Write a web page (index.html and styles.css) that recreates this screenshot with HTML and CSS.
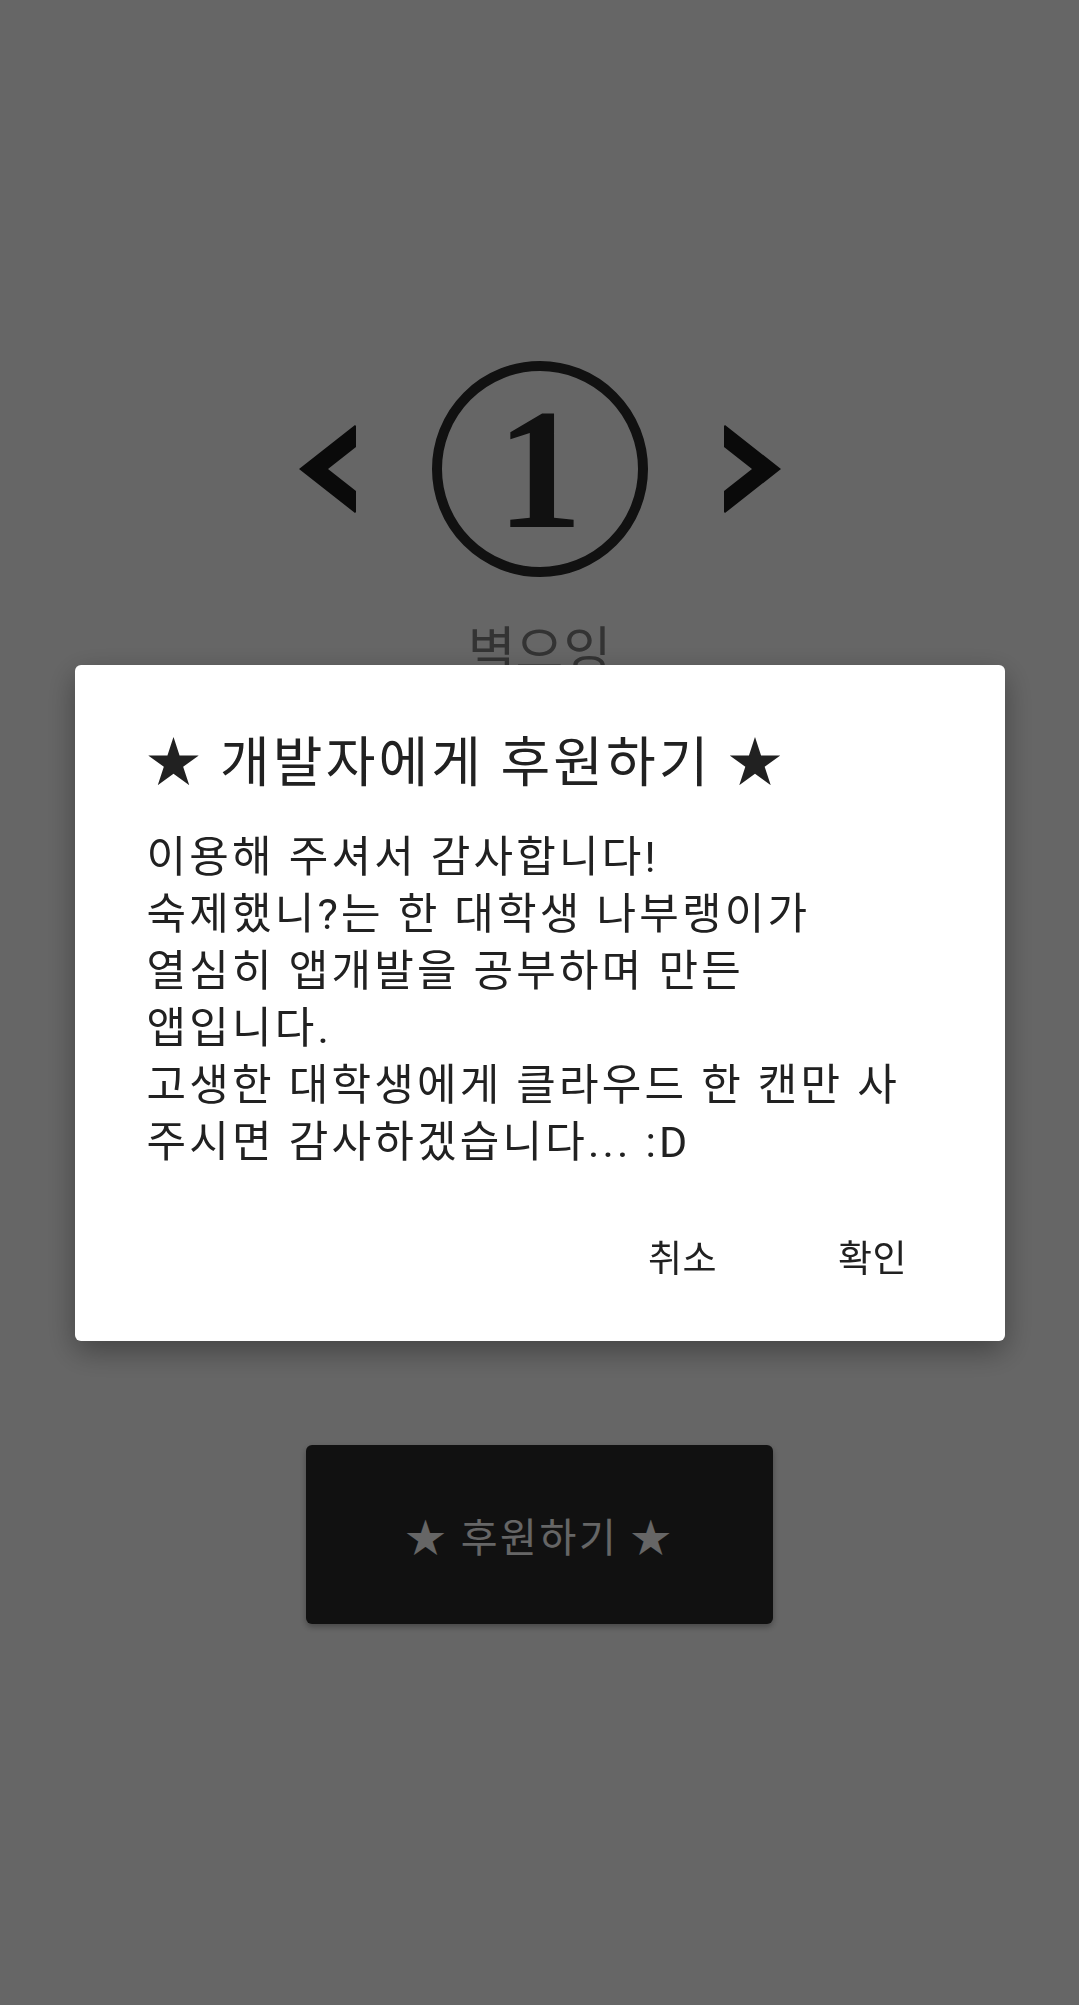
FILE: index.html
```html
<!DOCTYPE html>
<html lang="ko">
<head>
<meta charset="utf-8">
<title>후원하기</title>
<link rel="stylesheet" href="styles.css">
</head>
<body>
<main class="screen">
  <div class="pager">
    <svg class="arrow" viewBox="0 0 57 88" width="57" height="88" aria-hidden="true">
      <path d="M0 44 L56 0 L57 1 L57 22 L29 44 L57 66 L57 87 L56 88 Z"/>
    </svg>
    <div class="badge"><span class="num">1</span></div>
    <svg class="arrow" viewBox="0 0 57 88" width="57" height="88" aria-hidden="true">
      <path d="M57 44 L1 0 L0 1 L0 22 L28 44 L0 66 L0 87 L1 88 Z"/>
    </svg>
  </div>
  <p class="label">벽으잉</p>
  <button class="donate">★ 후원하기 ★</button>
</main>

<div class="scrim">
  <div class="dialog">
    <h2 class="dialog-title">★ 개발자에게 후원하기 ★</h2>
    <p class="dialog-body">이용해 주셔서 감사합니다!<br>숙제했니?는 한 대학생 나부랭이가<br>열심히 앱개발을 공부하며 만든<br>앱입니다.<br>고생한 대학생에게 클라우드 한 캔만 사<br>주시면 감사하겠습니다... :D</p>
    <div class="dialog-actions">
      <button class="action">취소</button>
      <button class="action">확인</button>
    </div>
  </div>
</div>
</body>
</html>
```
FILE: styles.css
```css
* { box-sizing: border-box; }

html, body {
  margin: 0;
  padding: 0;
}

body {
  width: 1079px;
  height: 2005px;
  background: #ffffff;
  font-family: Roboto, "Noto Sans CJK KR", sans-serif;
  overflow: hidden;
}

.screen {
  display: flex;
  flex-direction: column;
  align-items: center;
  padding-top: 361px;
  height: 2005px;
}

.pager {
  display: flex;
  align-items: center;
  justify-content: center;
  gap: 76px;
  height: 216px;
}

.arrow {
  display: block;
  fill: #191919;
}

.badge {
  width: 216px;
  height: 216px;
  border: 10px solid #2b2b2b;
  border-radius: 50%;
  display: flex;
  align-items: center;
  justify-content: center;
}

.num {
  font-family: "Liberation Serif", serif;
  font-weight: bold;
  font-size: 172px;
  line-height: 172px;
  color: #2b2b2b;
}

.label {
  margin: 41px 0 0;
  font-family: "Noto Sans CJK KR", sans-serif;
  font-size: 52px;
  line-height: 60px;
  color: #808080;
}

.donate {
  margin-top: 767px;
  width: 467px;
  height: 179px;
  border: none;
  border-radius: 6px;
  background: #2b2b2b;
  color: #ffffff;
  font-family: Roboto, "Noto Sans CJK KR", sans-serif;
  font-size: 40px;
  letter-spacing: 2.6px;
  box-shadow: 0 3px 6px rgba(0, 0, 0, 0.3);
}

.scrim {
  position: fixed;
  inset: 0;
  background: rgba(0, 0, 0, 0.6);
  display: flex;
  align-items: center;
  justify-content: center;
}

.dialog {
  width: 930px;
  background: #ffffff;
  border-radius: 6px;
  box-shadow: 0 10px 30px rgba(0, 0, 0, 0.35);
  color: #212121;
}

.dialog-title {
  margin: 0;
  padding: 67px 72px 0;
  font-size: 54px;
  line-height: 64px;
  font-weight: normal;
  letter-spacing: 3.1px;
}

.dialog-body {
  margin: 33px 0 0;
  padding: 0 72px;
  font-size: 43px;
  line-height: 57px;
  letter-spacing: 3.2px;
  white-space: nowrap;
}

.dialog-actions {
  display: flex;
  justify-content: flex-end;
  gap: 22px;
  margin-top: 53px;
  padding: 0 48px 45px 0;
}

.action {
  min-width: 168px;
  padding: 12px 0;
  border: none;
  background: transparent;
  color: #212121;
  font-family: Roboto, "Noto Sans CJK KR", sans-serif;
  font-size: 37px;
  line-height: 48px;
  letter-spacing: 0.5px;
}
```
